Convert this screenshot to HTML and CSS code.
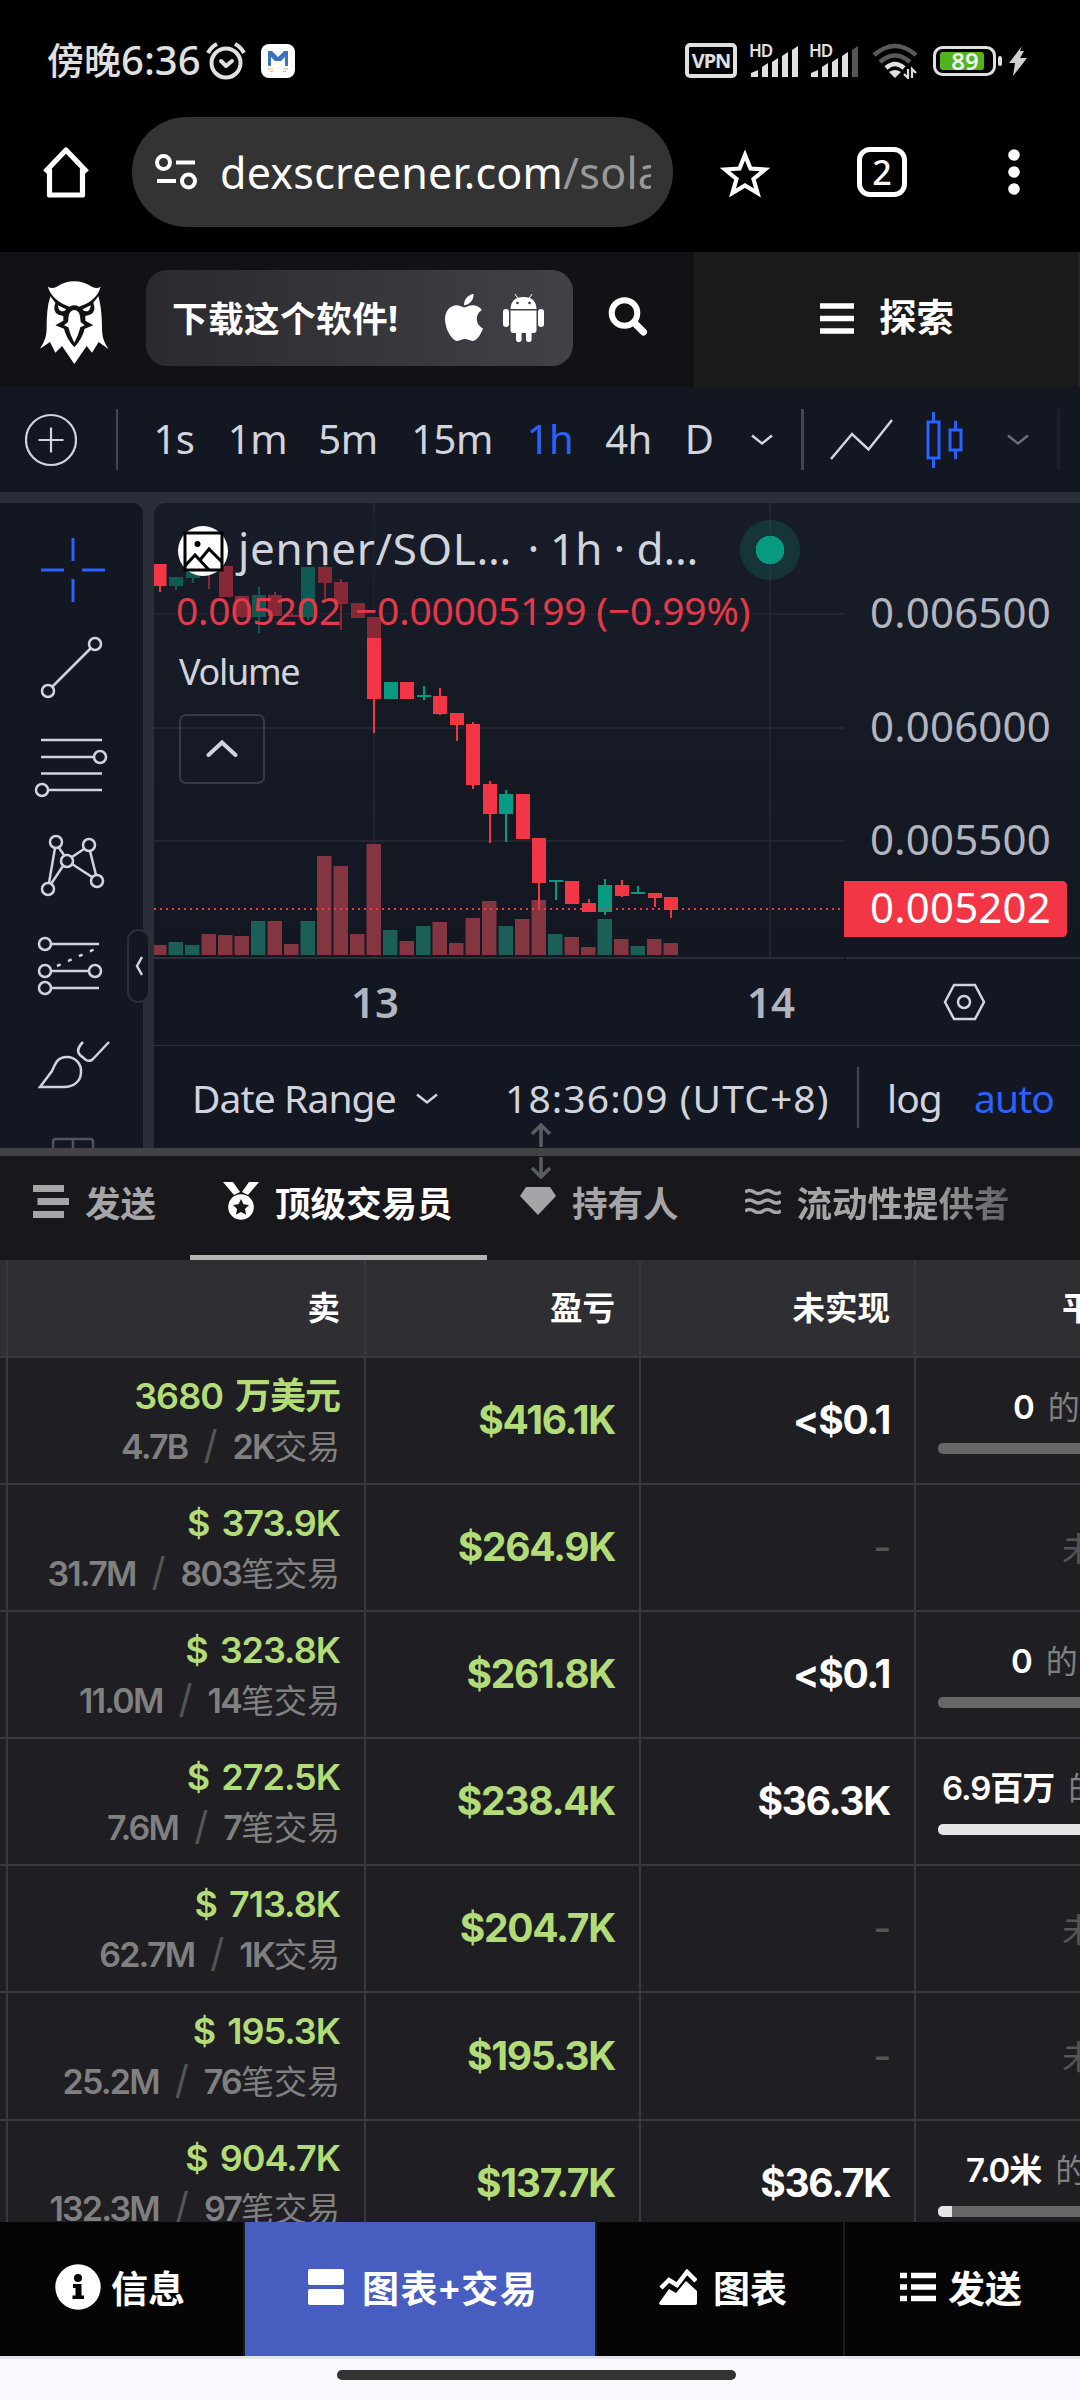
FILE: index.html
```html
<!DOCTYPE html>
<html lang="zh">
<head>
    <meta charset="UTF-8">
    <title>jenner/SOL</title>
    <link rel="stylesheet" href="styles.css">
</head>
<body>

<!--系统状态栏-->
<div class="status">
    <span class="clock">傍晚<b>6:36</b></span>
    <svg class="alarm" width="40" height="38" viewBox="0 0 40 38"><g fill="none" stroke="#e0e0e0" stroke-width="4"><circle cx="20" cy="21" r="14.5"/><path d="M2 11Q5 5 11 2M38 11Q35 5 29 2"/><path d="M15 19l5 5 6-5" stroke-linecap="round" stroke-linejoin="round"/></g></svg>
    <svg class="app" width="34" height="34" viewBox="0 0 34 34"><rect width="34" height="34" rx="8" fill="#fff"/><path d="M7 22V7h4l6 6 6-6h4v15h-3v-9l-4 4h-6l-4-4v9z" fill="#3973ba"/><path d="M7 25h5M22 25h5M9 27.500h3M22 27.500h3" stroke="#e8b968" stroke-width="1.200"/></svg>
    <span class="vpn">VPN</span>
    <svg class="signal" width="50" height="34" viewBox="0 0 50 34"><text x="0" y="13" class="hd">HD</text><path d="M2 33v-4l7-3v7zM13 33V23l6-4v14zM23 33V18l6-4v19zM33 33V12l6-4v25zM43 33V6l6-4v31z" fill="#e0e0e0"/></svg>
    <svg class="signal" width="50" height="34" viewBox="0 0 50 34"><text x="0" y="13" class="hd">HD</text><path d="M2 33v-4l7-3v7zM13 33V23l6-4v14zM23 33V18l6-4v19zM33 33V12l6-4v25z" fill="#e0e0e0"/><path d="M43 33V6l6-4v31z" fill="#555"/></svg>
    <svg class="wifi" width="46" height="36" viewBox="0 0 46 36"><g fill="none" stroke-width="4.500"><path d="M2 12Q23-6 44 12" stroke="#5a5a5a"/><path d="M8 19Q23 6 38 19" stroke="#5a5a5a"/><path d="M14 25Q23 17 32 25" stroke="#e0e0e0"/></g><path d="M17 29q6-4 12 0l-6 6z" fill="#e0e0e0"/><path d="M36 26v9l-4-4M40 35v-9l4 4" fill="none" stroke="#e0e0e0" stroke-width="2.200"/></svg>
    <svg class="battery" width="70" height="30" viewBox="0 0 70 30"><rect x="1.500" y="1.500" width="60" height="27" rx="8" fill="none" stroke="#e0e0e0" stroke-width="3"/><rect x="7" y="6" width="44" height="18" rx="3" fill="#53b31c"/><rect x="65" y="10" width="4" height="10" rx="2" fill="#e0e0e0"/><text x="32" y="23.500" text-anchor="middle" class="level">89</text></svg>
    <svg class="bolt" width="18" height="30" viewBox="0 0 18 30"><path d="M13 0L0 17h6L4 30 18 12h-7l4-7h-4z" fill="#d0d0d0"/></svg>
</div>

<!--浏览器地址栏-->
<div class="browser">
    <svg class="home" width="50" height="52" viewBox="0 0 50 52"><path d="M4 26L25 4l21 22M8.500 23v26h33V23" fill="none" stroke="#fff" stroke-width="5.200" stroke-linejoin="round"/></svg>
    <div class="address">
        <svg width="42" height="36" viewBox="0 0 42 36"><g fill="none" stroke="#fff" stroke-width="4"><circle cx="8.500" cy="8.500" r="6.500"/><path d="M21 8.500h19M2 27h19"/><circle cx="33.500" cy="27" r="6.500"/></g></svg>
        <div class="url">dexscreener.com<span>/sola</span></div>
    </div>
    <svg class="star" width="50" height="48" viewBox="0 0 50 48"><path d="M25 5l5.500 13.500L45 19.500 33.500 29 37.500 43 25 35.500 12.500 43 16.500 29 5 19.500l14.500-1z" fill="none" stroke="#fff" stroke-width="4.200"/></svg>
    <div class="count">2</div>
    <svg class="more" width="12" height="46" viewBox="0 0 12 46"><g fill="#fff"><circle cx="6" cy="6" r="5.800"/><circle cx="6" cy="23" r="5.800"/><circle cx="6" cy="40" r="5.800"/></g></svg>
</div>

<!--网站头部-->
<div class="header">
    <svg class="logo" width="90" height="98" viewBox="0 0 270 294">
        <path fill="#fff" d="M62 66C52 90 50 130 50 160 50 190 42 205 30 224L60 204 76 236 96 216 133 270 170 216 186 236 206 204 236 226C222 205 216 190 216 160 216 125 212 90 205 66L133 100z"/>
        <path fill="#121116" d="M56 60L108 92Q133 86 158 92L210 60 190 86Q200 114 180 122L166 126 166 140 190 154 164 164Q158 192 133 220 108 192 102 164L76 154 100 140 100 126 86 122Q66 114 76 86z"/>
        <path fill="#fff" d="M54 38Q66 46 80 38 132 6 186 38 200 46 212 38C205 66 182 84 158 94L147 98Q133 90 119 98L108 94C84 84 60 64 54 38z"/>
        <path fill="#fff" d="M133 108Q147 110 150 126L152 144 164 154 151 160Q146 182 133 206 120 182 115 160L102 154 114 144 116 126Q119 110 133 108zM84 94L108 106Q106 112 94 112 84 108 84 94zM182 94L158 106Q160 112 172 112 182 108 182 94z"/>
    </svg>
    <div class="download">
        <span>下载这个软件!</span>
        <svg class="apple" width="38" height="47" viewBox="4 32 376 448" preserveAspectRatio="none"><path fill="#fff" d="M318.700 268.700c-.2-36.700 16.400-64.400 50-84.800-18.800-26.900-47.200-41.700-84.700-44.600-35.500-2.800-74.300 20.700-88.500 20.700-15 0-49.400-19.700-76.400-19.700C63.300 141.200 4 184.800 4 273.500q0 39.300 14.400 81.200c12.800 36.700 59 126.700 107.200 125.200 25.200-.6 43-17.900 75.800-17.900 31.800 0 48.300 17.900 76.400 17.900 48.600-.7 90.400-82.500 102.600-119.300-65.200-30.700-61.700-90-61.700-91.900zm-56.600-164.200c27.300-32.400 24.800-61.900 24-72.500-24.100 1.400-52 16.400-67.900 34.900-17.500 19.800-27.800 44.300-25.600 71.900 26.100 2 49.900-11.400 69.500-34.300z"/></svg>
        <svg class="android" width="41" height="48" viewBox="0 0 41 48"><g fill="#fff"><path d="M7.500 15Q8 3 20.500 3T33.500 15z"/><path d="M7.500 16.500h26V36q0 3-3 3h-20q-3 0-3-3z"/><rect y="15" width="6" height="18" rx="3"/><rect x="35" y="15" width="6" height="18" rx="3"/><rect x="13" y="34" width="5.600" height="14" rx="2.800"/><rect x="23" y="34" width="5.600" height="14" rx="2.800"/><path d="M12 0l4 6M29 0l-4 6" stroke="#fff"/></g><circle cx="14.500" cy="9" r="1.300" fill="#3b3b40"/><circle cx="26.500" cy="9" r="1.300" fill="#3b3b40"/></svg>
    </div>
    <svg class="search" width="40" height="40" viewBox="0 0 40 40"><circle cx="16.500" cy="17" r="12.800" fill="none" stroke="#fff" stroke-width="6"/><path d="M26 26.500l9.500 9.500" stroke="#fff" stroke-width="7" stroke-linecap="round"/></svg>
    <div class="explore">
        <svg width="34" height="31" viewBox="0 0 34 31"><path d="M0 3h34M0 15.500h34M0 28h34" stroke="#fff" stroke-width="5.500"/></svg>
        <span>探索</span>
    </div>
</div>

<!--周期工具条-->
<div class="toolbar">
    <div class="add"><svg width="52" height="54" viewBox="0 0 52 54"><g fill="none" stroke="#d1d4dc" stroke-width="2.200"><circle cx="26" cy="27" r="25"/><path d="M13.500 27h25M26 14.500v25"/></g></svg></div>
    <ul class="periods">
        <li>1s</li>
        <li>1m</li>
        <li>5m</li>
        <li>15m</li>
        <li class="on">1h</li>
        <li>4h</li>
        <li>D</li>
        <li><svg width="22" height="12" viewBox="0 0 22 12"><path d="M1 1.500l10 8 10-8" fill="none" stroke="#d1d4dc" stroke-width="2.500"/></svg></li>
    </ul>
    <div class="types">
        <svg width="64" height="42" viewBox="0 0 64 42"><path d="M1 40l21-25 16.500 15.500L62 1" fill="none" stroke="#d1d4dc" stroke-width="2.500"/></svg>
        <svg width="38" height="56" viewBox="0 0 38 56"><path d="M2 10h11v36H2zM7.500 0v10M7.500 46v10M24 18h11v20H24zM29.500 9v9M29.500 38v9" fill="none" stroke="#2962ff" stroke-width="3"/></svg>
        <svg width="22" height="12" viewBox="0 0 22 12"><path d="M1 1.500l10 8 10-8" fill="none" stroke="#6c6f79" stroke-width="2.500"/></svg>
    </div>
</div>

<div class="main">
    <!--左侧画线工具-->
    <div class="tools">
        <svg viewBox="0 520 143 99"><path d="M41 570h23M82 570h23M73 538v23M73 579v23" stroke="#2962ff" stroke-width="3"/></svg>
        <svg viewBox="0 619 143 99"><circle cx="95" cy="644" r="6"/><circle cx="48" cy="691" r="6"/><path d="M52 687l39-39"/></svg>
        <svg viewBox="0 718 143 99"><path d="M41 740h61M41 757h53M41 773.500h61M48 790h54"/><circle cx="100" cy="757" r="6"/><circle cx="42" cy="790" r="6"/></svg>
        <svg viewBox="0 817 143 99"><circle cx="56" cy="842" r="6"/><circle cx="89" cy="845" r="6"/><circle cx="67" cy="861" r="6"/><circle cx="48" cy="889" r="6"/><circle cx="97" cy="881" r="6"/><path d="M55 848l-6 35M59 848l5 7M72 857l12-8M90 851l6 24M63 866l-12 18M72 864l20 13"/></svg>
        <svg viewBox="0 916 143 99"><circle cx="45" cy="944" r="6"/><circle cx="45" cy="971" r="6"/><circle cx="95" cy="971" r="6"/><circle cx="45" cy="988" r="6"/><path d="M51 944h48M51 971h38M51 988h48"/><path d="M57 966l38-17" stroke-dasharray="4 8"/></svg>
        <svg viewBox="0 1015 143 99"><path d="M40 1087l12-16c4-9 6-14 15-14a14 14 0 0 1 14 15c0 9-7 15-17 15zM83 1042q-8 8-3 13l6 5q4 2 7-1l16-17"/></svg>
        <svg viewBox="0 1114 143 34" class="cut"><path d="M53 1150v-8q0-3 3-3h34q3 0 3 3v8M73 1139v12" stroke="#50535e"/></svg>
        <div class="fold"><svg width="8" height="20" viewBox="0 0 8 20"><path d="M7 1L2 10l5 9" fill="none" stroke="#d1d4dc" stroke-width="2.500"/></svg></div>
    </div>

    <div class="chart">
        <div class="pane">
            <svg id="plot" width="926" height="542" viewBox="154 503 926 542"></svg>
            <div class="legend">
                <div class="name">
                    <svg width="50" height="50" viewBox="0 0 50 50"><circle cx="25" cy="25" r="25" fill="#fff"/><g fill="none" stroke="#000" stroke-width="3"><path d="M7 7h37v37H7z"/><path d="M7 40l10-11 14 15M22 34l9-11 13 13"/></g><circle cx="19.500" cy="18" r="3" fill="#000"/></svg>
                    <span class="pair">jenner/SOL…</span><span class="dot">·</span><span>1h</span><span class="dot">·</span><span>d…</span>
                </div>
                <div class="values"><span>0.005202</span><span>−0.00005199 (−0.99%)</span></div>
                <div class="volume">Volume</div>
                <div class="up"><svg width="32" height="18" viewBox="0 0 32 18"><path d="M2.500 16L16 3.500 29.500 16" fill="none" stroke="#d1d4dc" stroke-width="4" stroke-linecap="round"/></svg></div>
            </div>
            <div class="online"></div>
        </div>
        <div class="range">
            <span class="date">Date Range</span>
            <svg width="22" height="12" viewBox="0 0 22 12"><path d="M1 1.500l10 8 10-8" fill="none" stroke="#d1d4dc" stroke-width="2.500"/></svg>
            <span class="time">18:36:09 (UTC+8)</span>
            <span class="log">log</span>
            <span class="auto">auto</span>
        </div>
    </div>
</div>

<!--拖动条-->
<div class="splitter">
    <svg width="24" height="56" viewBox="0 0 24 56"><path d="M12 24V2M3 11l9-9 9 9M12 34v20M3 45l9 9 9-9" fill="none" stroke="#5b5c61" stroke-width="3.500"/></svg>
</div>

<ul class="tabs">
    <li><svg width="36" height="33" viewBox="0 0 36 33"><path d="M0 3.500h31M4.500 16.500H36M0 29.500h31" stroke="#a5a5a7" stroke-width="7"/></svg>发送</li>
    <li class="on"><svg width="36" height="38" viewBox="0 0 36 38"><path d="M0 0h10l7 10-6 3zM36 0H26l-7 10 6 3z" fill="#fff"/><circle cx="18" cy="25" r="12.800" fill="#fff"/><path d="M18 17l2.500 5.300 5.500.7-4 4 1 5.700-5-2.700-5 2.700 1-5.700-4-4 5.500-.7z" fill="#18171c"/></svg>顶级交易员</li>
    <li><svg width="36" height="28" viewBox="0 0 36 28"><path d="M6 0h24l6 9-18 19L0 9z" fill="#a5a5a7"/></svg>持有人</li>
    <li class="fade"><svg width="36" height="26" viewBox="0 0 36 26"><path d="M0 4q4.500-3 9 0t9 0 9 0 9 0M0 13.500q4.500-3 9 0t9 0 9 0 9 0M0 23q4.500-3 9 0t9 0 9 0 9 0" fill="none" stroke="#a5a5a7" stroke-width="3.500"/></svg><span>流动性提供者</span></li>
</ul>

<div class="table">
    <div class="row head">
        <div></div><div>卖</div><div>盈亏</div><div>未实现</div><div class="left">平衡</div>
    </div>
    <div id="rows"></div>
</div>

<ul class="nav">
    <li><svg width="46" height="46" viewBox="0 0 46 46"><circle cx="23" cy="23" r="22.700" fill="#fff"/><circle cx="23" cy="14" r="4" fill="#000"/><path d="M18 20h8.500v11.500H29V35H17.500v-3.500h3V24H18z" fill="#000"/></svg>信息</li>
    <li class="on"><svg width="36" height="36" viewBox="0 0 36 36"><rect width="36" height="16" rx="2" fill="#fff"/><rect y="20" width="36" height="16" rx="2" fill="#fff"/></svg>图表+交易</li>
    <li><svg width="38" height="36" viewBox="0 0 38 36"><path d="M2 19l8-8 8 5 10-13 9 9" fill="none" stroke="#fff" stroke-width="4.500"/><path d="M0 34l10-14 7 4 10-12 11 10v12q0 2-2 2H2q-2 0-2-2z" fill="#fff"/></svg>图表</li>
    <li><svg width="36" height="30" viewBox="0 0 36 30"><path d="M0 3.500h7M11 3.500h25M0 15h7M11 15h25M0 26.500h7M11 26.500h25" stroke="#fff" stroke-width="5.500"/></svg>发送</li>
</ul>
<div class="gesture"><div></div></div>

<script>

    var oPlot = document.getElementById("plot"),
        oRows = document.getElementById("rows"),
        RED = "#f23645",
        GREEN = "#089981",
        STEP = 16.5,
        html = "";

    //颜色, 最高, 实体上, 实体下, 最低, 成交量顶部
    var aBar = [
        ["r", 564, 564, 586, 592, 945],
        ["g", 577, 577, 586, 590, 942],
        ["g", 566, 566, 578, 583, 945],
        ["r", 560, 560, 570, 589, 934],
        ["r", 566, 566, 597, 597, 935],
        ["r", 596, 596, 617, 618, 936],
        ["g", 587, 595, 617, 633, 921],
        ["r", 592, 595, 616, 616, 921],
        ["r", 613, 615, 617, 617, 944],
        ["g", 567, 567, 617, 620, 921],
        ["r", 556, 567, 583, 598, 856],
        ["r", 579, 582, 604, 630, 866],
        ["r", 603, 603, 618, 618, 934],
        ["r", 617, 617, 699, 733, 844],
        ["g", 682, 682, 699, 699, 930],
        ["r", 682, 682, 699, 699, 941],
        ["g", 686, 695, 697, 700, 926],
        ["r", 688, 696, 714, 715, 922],
        ["r", 713, 713, 725, 741, 943],
        ["r", 722, 724, 785, 789, 918],
        ["r", 781, 784, 814, 843, 901],
        ["g", 790, 794, 814, 842, 926],
        ["r", 794, 794, 839, 839, 919],
        ["r", 838, 838, 883, 909, 900],
        ["g", 880, 880, 882, 900, 934],
        ["r", 881, 881, 904, 904, 937],
        ["r", 899, 903, 912, 912, 947],
        ["g", 879, 885, 912, 915, 919],
        ["r", 880, 885, 896, 897, 939],
        ["g", 886, 892, 894, 894, 946],
        ["r", 893, 893, 898, 907, 939],
        ["r", 897, 897, 910, 918, 943]
    ];

    function rect(x, y, w, h, c) {
        return '<rect x="' + x + '" y="' + y + '" width="' + w + '" height="' + h + '" fill="' + c + '"/>';
    }

    //网格
    [614, 728, 841].forEach(function (y) {
        html += rect(154, y - 1, 690, 2, "#222530");
    });
    [374, 770].forEach(function (x) {
        html += rect(x - 1, 503, 2, 454, "#222530");
    });

    //成交量和K线
    aBar.forEach(function (b, i) {
        var x = 159.5 + i * STEP;
        html += rect(x - 7.5, b[5], 14.5, 955 - b[5], b[0] == "r" ? "#833640" : "#1b5f57");
    });
    aBar.forEach(function (b, i) {
        var x = Math.round(159.5 + i * STEP),
            c = b[0] == "r" ? RED : GREEN;
        html += rect(x - 1, b[1], 2, b[4] - b[1], c);
        html += rect(x - 7, b[2], 14, b[3] - b[2], c);
    });

    html += '<path d="M154 909H844" stroke="#f23645" stroke-width="2" stroke-dasharray="2 4"/>';
    html += rect(154, 957, 690, 2, "#2a2e39") + rect(846, 957, 234, 2, "#2a2e39");
    html += '<path d="M844 881h218q5 0 5 5v46q0 5-5 5h-218z" fill="#f23645"/>';

    [["0.006500", 628], ["0.006000", 742], ["0.005500", 855]].forEach(function (p) {
        html += '<text class="price" x="870" y="' + p[1] + '">' + p[0] + '</text>';
    });
    html += '<text class="price now" x="870" y="923">0.005202</text>';
    html += '<text class="day" x="375" y="1018">13</text><text class="day" x="771" y="1018">14</text>';
    html += '<g fill="none" stroke="#d1d4dc" stroke-width="2.500"><path d="M945 1002l9-17h21l9 17-9 17h-21z"/><circle cx="964" cy="1002" r="6"/></g>';
    oPlot.innerHTML = html;

    //卖出, 数量, 笔数, 笔数单位, 盈亏, 未实现, 余额, 进度, 缩进
    var aRow = [
        ["3680 万美元", "4.7B", "2K", "交易", "$416.1K", "&lt;$0.1", "0", 0, 75],
        ["$ 373.9K", "31.7M", "803", "笔交易", "$264.9K", "-", "", 0, 0],
        ["$ 323.8K", "11.0M", "14", "笔交易", "$261.8K", "&lt;$0.1", "0", 0, 73],
        ["$ 272.5K", "7.6M", "7", "笔交易", "$238.4K", "$36.3K", "6.9百万", 100, 4],
        ["$ 713.8K", "62.7M", "1K", "交易", "$204.7K", "-", "", 0, 0],
        ["$ 195.3K", "25.2M", "76", "笔交易", "$195.3K", "-", "", 0, 0],
        ["$ 904.7K", "132.3M", "97", "笔交易", "$137.7K", "$36.7K", "7.0米", 10, 28]
    ];

    oRows.innerHTML = aRow.map(function (r) {
        var last = '<div class="left unknown">未知</div>';
        if (r[6]) {
            last = '<div class="balance"><p style="padding-left:' + r[8] + 'px"><b>' + r[6] + '</b>的</p><div class="bar"><i style="width:' + r[7] + '%"></i></div></div>';
        }
        return '<div class="row"><div></div>' +
            '<div class="sell"><b>' + r[0] + '</b><p><b>' + r[1] + '</b><i>/</i><b>' + r[2] + '</b>' + r[3] + '</p></div>' +
            '<div class="pnl">' + r[4] + '</div>' +
            '<div class="' + (r[5] == "-" ? "none" : "open") + '">' + r[5] + '</div>' + last + '</div>';
    }).join("");

</script>
</body>
</html>
```
FILE: styles.css
```css
* {
    margin: 0;
    padding: 0;
    box-sizing: border-box;
}

ul, li {
    list-style: none;
}

i {
    font-style: normal;
}

svg {
    display: block;
    flex: none;
}

body {
    width: 1080px;
    height: 2400px;
    overflow: hidden;
    display: flex;
    flex-direction: column;
    background: #000;
    color: #fff;
    font-family: "Noto Sans", "Noto Sans CJK SC", sans-serif;
    white-space: nowrap;
}

body > * {
    flex: none;
}

/*状态栏*/
.status {
    display: flex;
    align-items: center;
    height: 117px;
    padding: 4px 0 0 47px;
    color: #e0e0e0;
}
.status .clock {
    width: 159px;
    font-size: 37px;
    font-weight: 500;
    line-height: 50px;
}
.status .clock b {
    font-size: 40px;
    font-weight: 500;
    letter-spacing: 0;
}
.status .alarm {
    width: 40px;
}
.status .app {
    margin-left: 15px;
}
.status .vpn {
    width: 52px;
    height: 35px;
    margin-left: 390px;
    border: 4px solid #e0e0e0;
    border-radius: 5px;
    font-size: 20px;
    font-weight: 700;
    line-height: 27px;
    text-align: center;
    letter-spacing: -1px;
}
.status .signal {
    margin-left: 12px;
    overflow: visible;
}
.status .signal + .signal {
    margin-left: 10px;
}
.hd {
    font-size: 17px;
    font-weight: 600;
    letter-spacing: -1px;
    fill: #e0e0e0;
}
.status .wifi {
    margin-left: 13px;
}
.status .battery {
    margin-left: 15px;
}
.level {
    font-size: 24px;
    font-weight: 600;
    fill: #f0f0f0;
}
.status .bolt {
    margin-left: 6px;
}

/*地址栏*/
.browser {
    display: flex;
    align-items: center;
    height: 135px;
    padding: 0 0 25px 41px;
}
.address {
    display: flex;
    align-items: center;
    width: 541px;
    height: 110px;
    margin-left: 41px;
    padding-left: 23px;
    border-radius: 55px;
    background: #333;
}
.url {
    width: 431px;
    margin-left: 23px;
    overflow: hidden;
    font-size: 43px;
    letter-spacing: 0.25px;
}
.url span {
    color: #999;
}
.browser .star {
    margin: 4px 0 0 47px;
}
.count {
    width: 50px;
    height: 50px;
    margin-left: 87px;
    border: 5px solid #fff;
    border-radius: 13px;
    font-size: 34px;
    font-weight: 500;
    line-height: 40px;
    text-align: center;
}
.browser .more {
    margin-left: 101px;
}

/*网站头部*/
.header {
    display: flex;
    align-items: center;
    height: 135px;
    background: #121116;
    font-weight: 700;
}
.header .logo {
    margin: 7px 0 0 30px;
}
.download {
    display: flex;
    align-items: center;
    width: 427px;
    height: 96px;
    margin: -3px 0 0 26px;
    padding-left: 26px;
    border-radius: 21px;
    background: linear-gradient(90deg, #2a292e, #424147);
    font-size: 35.7px;
}
.download span {
    width: 273px;
    margin-top: -4px;
    letter-spacing: 0.3px;
}
.download .apple {
    margin-top: -2px;
}
.download .android {
    margin: 0 0 0 20px;
}
.header .search {
    margin-left: 35px;
    margin-top: -8px;
}
.explore {
    display: flex;
    align-items: center;
    width: 386px;
    height: 135px;
    margin-left: 46px;
    padding: 0 0 2px 126px;
    border-right: 2px solid #262626;
    background: #1a1a1a;
    font-size: 37.5px;
}
.explore span {
    margin: -8px 0 0 25px;
}

/*周期*/
.toolbar {
    display: flex;
    align-items: center;
    height: 105px;
    background: #131722;
    color: #d1d4dc;
}
.toolbar .add {
    display: flex;
    align-items: center;
    width: 118px;
    height: 61px;
    padding-left: 25px;
    border-right: 2px solid #434651;
}
.periods {
    display: grid;
    grid-template-columns: 84px 83px 98px 110px 86px 71px 70px 56px;
    align-items: center;
    margin: -2px 0 0 14px;
    font-size: 40px;
    text-align: center;
    letter-spacing: -0.5px;
}
.periods li svg {
    margin: 3px auto 0;
}
.periods .on {
    color: #2962ff;
}
.types {
    display: flex;
    align-items: center;
    width: 259px;
    height: 61px;
    margin-left: 11px;
    padding-left: 26px;
    border-left: 3px solid #434651;
    border-right: 3px solid #1c202b;
}
.types svg + svg {
    margin-left: 32px;
}
.types svg + svg + svg {
    margin-left: 43px;
}

/*图表区域*/
.main {
    display: flex;
    gap: 11px;
    height: 656px;
    padding-top: 11px;
    background: #2a2e39;
}
.tools {
    position: relative;
    width: 143px;
    padding-top: 17px;
    border-radius: 0 11px 0 0;
    background: #131722;
}
.tools > svg {
    width: 143px;
    height: 99px;
    fill: none;
    stroke: #d1d4dc;
    stroke-width: 2.5;
}
.tools > .cut {
    height: 34px;
}
.fold {
    position: absolute;
    top: 426px;
    left: 127px;
    display: flex;
    align-items: center;
    width: 23px;
    height: 74px;
    padding-left: 6px;
    border: 2px solid #2a2e39;
    border-radius: 11px;
    background: #131722;
}
.chart {
    width: 926px;
    border-radius: 11px 0 0 0;
    background: linear-gradient(180deg, #181c27 0, #131722 454px);
    overflow: hidden;
}
.pane {
    position: relative;
    height: 543px;
    border-bottom: 1px solid #2a2e39;
}
.price {
    font-size: 42px;
    letter-spacing: 0.2px;
    fill: #b2b5be;
}
.now {
    fill: #fff;
}
.day {
    font-size: 42px;
    font-weight: 600;
    fill: #b2b5be;
    text-anchor: middle;
}
/*图例盖在K线上面*/
.legend {
    position: absolute;
    top: 10px;
    left: 12px;
    color: #d1d4dc;
}
.name {
    display: flex;
    align-items: center;
    height: 75px;
    padding-left: 12px;
    background: rgba(24, 28, 39, 0.5);
    font-size: 44px;
}
.name .pair {
    width: 276px;
    margin-left: 10px;
    letter-spacing: 0.7px;
}
.name .dot {
    width: 34px;
    text-align: center;
}
.name span {
    margin-top: -5px;
}
.name .pair + .dot {
    margin-left: 3px;
    width: 33px;
}
.values {
    display: flex;
    gap: 14px;
    width: 600px;
    height: 50px;
    padding-left: 10px;
    background: rgba(24, 28, 39, 0.5);
    color: #e23a48;
    font-size: 39px;
    line-height: 44px;
    letter-spacing: -0.2px;
}
.volume {
    padding: 9px 0 0 13px;
    font-size: 36px;
    line-height: 50px;
    letter-spacing: -1.3px;
}
.up {
    display: flex;
    align-items: center;
    justify-content: center;
    width: 86px;
    height: 70px;
    margin: 17px 0 0 13px;
    border: 2px solid #363a45;
    border-radius: 7px;
}
.up svg {
    margin-top: -2px;
}
.online {
    position: absolute;
    top: 17px;
    left: 586px;
    width: 60px;
    height: 60px;
    border-radius: 50%;
    background: radial-gradient(circle, #089981 14px, rgba(8, 153, 129, 0.2) 14.5px);
}
.range {
    display: flex;
    align-items: center;
    height: 102px;
    padding: 3px 0 0 38px;
    color: #d1d4dc;
    font-size: 39px;
    letter-spacing: -0.9px;
}
.range span {
    margin-top: -2px;
}
.range .date {
    width: 224px;
}
.range .time {
    width: 354px;
    margin-left: 67px;
    border-right: 2px solid #434651;
    line-height: 61px;
    letter-spacing: 1.1px;
}
.range .log {
    width: 87px;
    margin-left: 28px;
}
.range .auto {
    color: #2962ff;
}

.splitter {
    position: relative;
    height: 8px;
    background: #434247;
}
.splitter svg {
    position: absolute;
    top: -25px;
    left: 529px;
}

/*标签页*/
.tabs {
    display: flex;
    height: 104px;
    padding-left: 33px;
    background: #18171c;
    color: #a5a5a7;
    font-size: 35.5px;
    font-weight: 700;
}
.tabs li {
    display: flex;
    align-items: center;
    gap: 16px;
    height: 104px;
    padding-bottom: 14px;
}
.tabs .on {
    width: 297px;
    margin: 0 33px 0 34px;
    padding: 0 0 9px 33px;
    border-bottom: 5px solid #b3b3b3;
    color: #fff;
}
.tabs .fade {
    margin-left: 66px;
}
.tabs .fade span {
    background: linear-gradient(90deg, #a5a5a7 60%, #5c5c60);
    -webkit-background-clip: text;
    color: transparent;
}

/*交易员表格*/
.table {
    height: 962px;
    overflow: hidden;
    background: #1f1e23;
}
.row {
    display: grid;
    grid-template-columns: 8px 358px 275px 275px 164px;
    height: 127.1px;
    border-bottom: 2px solid #39383e;
}
.row > div {
    display: flex;
    align-items: center;
    justify-content: flex-end;
    padding: 0 24px 2px 0;
    border-right: 2px solid #39383e;
    overflow: hidden;
}
.row > div:first-child {
    padding: 0;
}
.row > div:last-child {
    border: 0;
}
.row > .left {
    justify-content: flex-start;
    padding: 0 0 2px 146px;
}
.head {
    height: 98px;
    background: #2f2e33;
    font-size: 32.5px;
    font-weight: 700;
}
.row.head > div {
    padding-bottom: 5px;
}
.row > .sell {
    flex-direction: column;
    align-items: flex-end;
    justify-content: center;
    padding-bottom: 0;
    font-family: Inter, "Noto Sans CJK SC", sans-serif;
}
.sell > b {
    color: #b2dc78;
    font-size: 36px;
    font-weight: 600;
    line-height: 52px;
    letter-spacing: -1px;
    word-spacing: 4px;
}
.sell p {
    color: #808080;
    font-size: 33px;
    line-height: 50px;
}
.sell p b {
    font-size: 34px;
    font-weight: 600;
    letter-spacing: -1.8px;
}
.sell p i {
    margin: 0 15px 0 16px;
    color: #555;
    font-size: 39px;
    line-height: 40px;
}
.pnl, .open, .none {
    color: #b2dc78;
    font-family: Inter, sans-serif;
    font-size: 39px;
    font-weight: 700;
    letter-spacing: -1.3px;
}
.open {
    color: #fff;
}
.none {
    color: #555;
    font-weight: 500;
}
.unknown {
    color: #555;
    font-size: 33px;
}
.row > .balance {
    display: block;
    padding: 22px 0 0 22px;
}
.balance p {
    height: 63px;
    color: #808080;
    font-family: Inter, "Noto Sans CJK SC", sans-serif;
    font-size: 32px;
    line-height: 54px;
}
.balance b {
    margin-right: 14px;
    color: #fff;
    font-size: 33px;
    font-weight: 600;
    letter-spacing: -1px;
}
.bar {
    height: 11px;
    border-radius: 5px 0 0 5px;
    background: #676767;
    overflow: hidden;
}
.bar i {
    display: block;
    height: 11px;
    background: #e6e6e6;
}

/*底部导航*/
.nav {
    display: grid;
    grid-template-columns: 245px 352px 248px 235px;
    height: 134px;
    background: #050505;
    font-size: 37px;
    font-weight: 700;
}
.nav li {
    display: flex;
    align-items: center;
    gap: 18px;
    padding: 0 0 4px 55px;
    border-right: 2px solid #1a1a1a;
}
.nav li:first-child {
    gap: 10px;
}
.nav .on {
    padding-left: 63px;
    background: #475dbf;
    letter-spacing: 1.4px;
}
.nav li:nth-child(3) {
    padding-left: 62px;
    gap: 16px;
}
.nav li:last-child {
    gap: 12px;
    border: 0;
}
.gesture {
    height: 44px;
    padding-top: 11px;
    border-top: 3px solid #e4e4e9;
    background: #f9f8ff;
}
.gesture div {
    width: 399px;
    height: 10px;
    margin-left: 337px;
    border-radius: 5px;
    background: #333;
}
```
